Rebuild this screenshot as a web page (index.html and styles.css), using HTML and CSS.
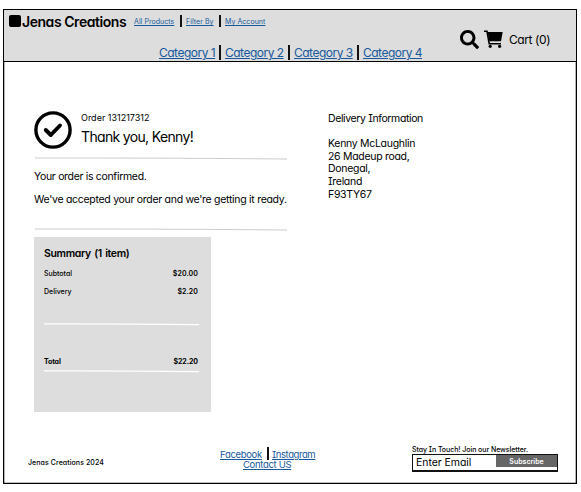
FILE: index.html
```html
<!DOCTYPE html>
<html lang="en">
<head>
<meta charset="utf-8">
<title>Jenas Creations</title>
<link rel="stylesheet" href="styles.css">
</head>
<body>
<div class="page">
  <header class="header">
    <div class="top">
      <span class="logo"></span><strong class="brand">Jenas Creations</strong>
      <nav class="links">
        <a href="#">All Products</a><i></i><a href="#">Filter By</a><i></i><a href="#">My Account</a>
      </nav>
    </div>
    <nav class="categories">
      <a href="#">Category 1</a><i></i><a href="#">Category 2</a><i></i><a href="#">Category 3</a><i></i><a href="#">Category 4</a>
    </nav>
    <div class="tools">
      <svg class="search" viewBox="0 0 512 512"><path d="M505 442.700 405.300 343c-4.500-4.500-10.600-7-17-7H372c27.600-35.300 44-79.700 44-128C416 93.100 322.900 0 208 0S0 93.100 0 208s93.100 208 208 208c48.300 0 92.700-16.400 128-44v16.300c0 6.400 2.500 12.500 7 17l99.700 99.700c9.400 9.400 24.600 9.400 33.900 0l28.300-28.300c9.400-9.400 9.400-24.600.1-34zM208 336c-70.700 0-128-57.200-128-128 0-70.700 57.200-128 128-128 70.700 0 128 57.200 128 128 0 70.700-57.200 128-128 128z"/></svg>
      <svg class="cart" viewBox="0 0 19 18"><path d="M3.600 1.900H18.700L17 11.300H5.300z"/><path class="handle" d="M0 1.300H3L5.200 13.700H17"/><circle cx="6.200" cy="16.300" r="1.600"/><circle cx="15.600" cy="16.300" r="1.600"/></svg>
      <span class="cart-label">Cart (0)</span>
    </div>
  </header>
  <main class="main">
    <section class="order">
      <div class="thanks">
        <svg class="check" viewBox="0 0 38 38"><circle cx="19" cy="19" r="17.100"/><path d="M11.800 19l5 5 9.200-9.500"/></svg>
        <div>
          <p class="number">Order 131217312</p>
          <h1>Thank you, Kenny!</h1>
        </div>
      </div>
      <svg class="rule" viewBox="0 0 254 3"><path d="M1 1Q120 .8 253 2"/></svg>
      <p class="confirmed">Your order is confirmed.</p>
      <p class="accepted">We've accepted your order and we're getting it ready.</p>
      <svg class="rule" viewBox="0 0 254 3"><path d="M1 1Q120 .8 253 2"/></svg>
      <div class="summary">
        <h2>Summary (1 item)</h2>
        <div class="row"><span>Subtotal</span><span class="amount">$20.00</span></div>
        <div class="row"><span>Delivery</span><span class="amount">$2.20</span></div>
        <svg class="line" viewBox="0 0 156 3"><path d="M0 .9Q80 .8 155 1.600"/></svg>
        <div class="row total"><span>Total</span><span class="amount">$22.20</span></div>
        <svg class="line" viewBox="0 0 156 3"><path d="M0 .9Q80 .8 155 1.600"/></svg>
      </div>
    </section>
    <section class="delivery">
      <p class="delivery-title">Delivery Information</p>
      <address>Kenny McLaughlin<br>26 Madeup road,<br>Donegal,<br>Ireland<br>F93TY67</address>
    </section>
  </main>
  <footer class="footer">
    <p class="copyright">Jenas Creations 2024</p>
    <nav class="social">
      <div><a href="#">Facebook</a><i></i><a href="#">Instagram</a></div>
      <a class="contact" href="#">Contact US</a>
    </nav>
    <form class="newsletter">
      <label>Stay In Touch! Join our Newsletter.</label>
      <div class="field"><span class="placeholder">Enter Email</span><span class="subscribe">Subscribe</span></div>
    </form>
  </footer>
</div>
</body>
</html>
```
FILE: styles.css
```css
* { box-sizing: border-box; }
body { margin: 0; padding: 9px 4px 8px 3px; background: #fff; color: #000; font-family: Inter, "Liberation Sans", sans-serif; font-feature-settings: "cv11", "cv08"; white-space: nowrap; }
p, h1, h2 { margin: 0; font-weight: 400; }
svg { display: block; flex: none; }
a { color: #17599c; text-underline-offset: 1px; text-decoration-thickness: 1px; }
i { display: block; width: 1.500px; background: #111; flex: none; }
.page { width: 574px; height: 475px; border: 1px solid #000; border-bottom-width: 1.500px; box-shadow: inset 0 0 0 .3px #000; display: flex; flex-direction: column; }
.header { height: 52px; flex: none; background: #ddd; border-bottom: 1px solid #000; display: grid; grid-template-columns: 155px 301px 1fr; grid-template-rows: 26px 25px; }
.top { grid-column: 1 / 3; display: flex; padding: 5px 0 0 5px; height: 26px; }
.logo { width: 12px; height: 12px; border-radius: 2px; background: #000; }
.brand { width: 113px; padding-left: 1px; font-size: 14px; line-height: 14px; font-weight: 600; letter-spacing: -.45px; }
.links { display: grid; grid-template-columns: 46px 6px 33px 6px 42px; font-size: 7px; line-height: 13px; letter-spacing: .05px; height: 12px; }
.links i { height: 12px; }
.categories { grid-column: 2; display: grid; grid-template-columns: 60px 6px 63px 6px 63px 6px 60px; font-size: 12px; line-height: 15px; letter-spacing: -.5px; padding-top: 9px; }
.categories i { height: 15px; }
.tools { grid-column: 3; grid-row: 1 / 3; display: flex; padding-top: 20px; }
.search { width: 19px; height: 19px; }
.cart { width: 19px; height: 18px; margin-left: 5px; }
.handle { fill: none; stroke: #000; stroke-width: 1.600; }
.cart-label { font-size: 12px; line-height: 20px; margin-left: 6px; letter-spacing: -.4px; }
.main { display: grid; grid-template-columns: 294px 1fr; padding: 50px 0 0 30px; height: 366px; }
.order { width: 254px; }
.thanks { display: flex; height: 45px; }
.check { width: 38px; height: 38px; margin-top: -1px; fill: none; stroke: #000; stroke-width: 3.400; }
.check path { stroke-width: 3.900; stroke-linecap: round; stroke-linejoin: round; }
.number { margin: 0 0 0 9px; font-size: 9px; line-height: 12px; letter-spacing: 0; }
h1 { margin: 3px 0 0 9px; font-size: 14px; line-height: 20px; letter-spacing: -.66px; }
.rule { width: 254px; height: 3px; stroke: #ccc; fill: none; }
.confirmed { margin-top: 10px; font-size: 10.500px; line-height: 14px; letter-spacing: -.32px; }
.accepted { margin: 9px 0 21px; font-size: 10.500px; line-height: 14px; letter-spacing: -.29px; }
.summary { width: 177px; height: 175px; margin-top: 6px; padding: 10px 13px 0 10px; background: #ddd; }
h2 { font-size: 10.500px; line-height: 14px; font-weight: 600; letter-spacing: -.34px; word-spacing: 1px; margin-bottom: 4px; }
.row { display: flex; justify-content: space-between; height: 18px; line-height: 18px; font-size: 7px; font-weight: 500; }
.amount { letter-spacing: .1px; font-weight: 600; }
.line { width: 156px; height: 3px; stroke: #fff; stroke-width: 1.300; fill: none; }
.row + .line { margin-top: 22px; }
.total, .total .amount { font-weight: 700; }
.total { margin-top: 27px; letter-spacing: -.1px; }
.total .amount { letter-spacing: -.05px; }
.total + .line { margin-top: -1px; }
.delivery-title { font-size: 10.500px; line-height: 14px; letter-spacing: -.38px; }
address { font-style: normal; font-size: 10.500px; line-height: 12.700px; margin-top: 12px; letter-spacing: -.3px; }
.footer { flex: 1; display: grid; grid-template-columns: 191px 192px 1fr; padding: 17px 0 0 24px; }
.copyright { font-size: 7px; line-height: 12px; padding-top: 12px; font-weight: 500; letter-spacing: .08px; }
.social { font-size: 9.500px; line-height: 10px; padding: 5px 0 0 1px; letter-spacing: -.32px; }
.social div { display: grid; grid-template-columns: 47px 5px 44px; height: 10px; }
.social div a:last-child { letter-spacing: -.42px; }
.social i { height: 13px; margin-top: -3px; }
.contact { display: block; margin-left: 23px; width: 50px; }
.newsletter { padding-left: 1px; }
.newsletter label { display: block; font-size: 7px; line-height: 9px; height: 9px; font-weight: 500; letter-spacing: -.05px; }
.field { width: 146px; height: 18px; border: 1px solid #111; border-bottom-width: 2px; display: flex; justify-content: space-between; }
.placeholder { font-size: 10.500px; line-height: 15px; padding-left: 3px; letter-spacing: -.05px; }
.subscribe { width: 61px; height: 12px; background: #666; color: #fff; font-size: 7px; line-height: 13px; font-weight: 600; text-align: center; }
```
